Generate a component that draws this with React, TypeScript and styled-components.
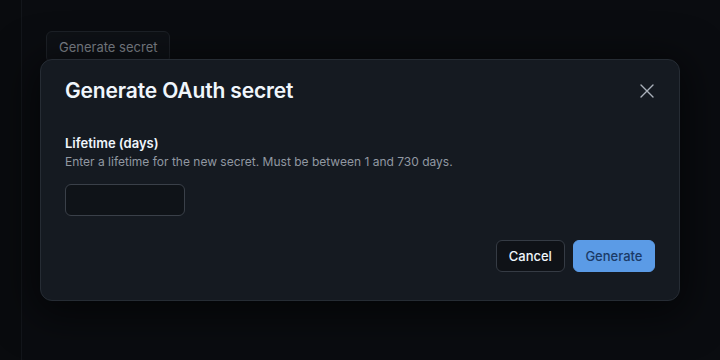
import React from "react";
import styled, { createGlobalStyle } from "styled-components";

const Global = createGlobalStyle`
  html, body { margin: 0; padding: 0; background: #0a0c10; }
  body { font-family: Inter, "Noto Sans", "Liberation Sans", sans-serif; -webkit-font-smoothing: antialiased; }
  * { box-sizing: border-box; }
`;

const Page = styled.div`
  position: relative;
  width: 720px;
  height: 360px;
  display: flex;
  background: #0a0c10;
  overflow: hidden;
`;

const Sidebar = styled.div`
  width: 22px;
  flex: none;
  background: #090b0e;
  border-right: 1px solid #13161b;
`;

const Main = styled.main`
  flex: 1;
  padding: 31px 24px;
`;

const GhostButton = styled.button`
  height: 32px;
  padding: 0 12px;
  border: 1px solid #1d2127;
  border-radius: 6px;
  background: #0e1116;
  color: #80858c;
  font: 400 13px/1 Inter, "Noto Sans", sans-serif;
`;

const Overlay = styled.div`
  position: absolute;
  inset: 0;
  display: flex;
  align-items: center;
  justify-content: center;
`;

const Dialog = styled.div`
  width: 640px;
  height: 242px;
  background: #151a21;
  border: 1px solid #262c34;
  border-radius: 12px;
  box-shadow: 0 8px 40px 8px rgba(0, 0, 0, 0.55);
  padding: 0 24px;
  display: flex;
  flex-direction: column;
  color: #f0f6fc;
`;

const Header = styled.div`
  padding-top: 16px;
  height: 46px;
  display: flex;
  align-items: center;
  justify-content: space-between;
`;

const Title = styled.h2`
  margin: 0;
  font: 600 21px/30px Inter, "Noto Sans", sans-serif;
  letter-spacing: -0.15px;
  color: #f0f6fc;
`;

const CloseButton = styled.button`
  width: 24px;
  height: 24px;
  margin-right: -4px;
  padding: 0;
  border: 0;
  background: transparent;
  color: #aab1ba;
  display: flex;
  align-items: center;
  justify-content: center;
`;

const Body = styled.div`
  padding-top: 27px;
  display: flex;
  flex-direction: column;
`;

const Label = styled.label`
  font: 600 13px/20px Inter, "Noto Sans", sans-serif;
  color: #f0f6fc;
`;

const Hint = styled.p`
  margin: 0;
  font: 400 12px/18px Inter, "Noto Sans", sans-serif;
  color: #9198a1;
`;

const Input = styled.input`
  margin-top: 13px;
  width: 120px;
  height: 32px;
  border: 1px solid #3a4049;
  border-radius: 6px;
  background: #0f1318;
  color: #f0f6fc;
  padding: 0 12px;
  font: 400 14px Inter, sans-serif;
  outline: none;
`;

const Footer = styled.div`
  margin-top: 24px;
  display: flex;
  justify-content: flex-end;
  gap: 8px;
`;

const Button = styled.button<{ $primary?: boolean }>`
  height: 32px;
  padding: 0 ${(p) => (p.$primary ? "11.5px" : "12px")};
  border-radius: 6px;
  font: 500 13px/1 Inter, "Noto Sans", sans-serif;
  border: 1px solid ${(p) => (p.$primary ? "#5b9be6" : "#353b44")};
  background: ${(p) => (p.$primary ? "#5b9be6" : "#0f1217")};
  color: ${(p) => (p.$primary ? "#1a3a66" : "#f0f6fc")};
`;

export default function App() {
  return (
    <Page>
      <Global />
      <Sidebar />
      <Main>
        <GhostButton>Generate secret</GhostButton>
      </Main>
      <Overlay>
        <Dialog role="dialog">
          <Header>
            <Title>Generate OAuth secret</Title>
            <CloseButton aria-label="Close">
              <svg width="24" height="24" viewBox="0 0 24 24" fill="none" stroke="currentColor" strokeWidth="1.4" strokeLinecap="round">
                <path d="M6 6l12 12M18 6L6 18" />
              </svg>
            </CloseButton>
          </Header>
          <Body>
            <Label htmlFor="lifetime">Lifetime (days)</Label>
            <Hint>Enter a lifetime for the new secret. Must be between 1 and 730 days.</Hint>
            <Input id="lifetime" />
          </Body>
          <Footer>
            <Button>Cancel</Button>
            <Button $primary>Generate</Button>
          </Footer>
        </Dialog>
      </Overlay>
    </Page>
  );
}
